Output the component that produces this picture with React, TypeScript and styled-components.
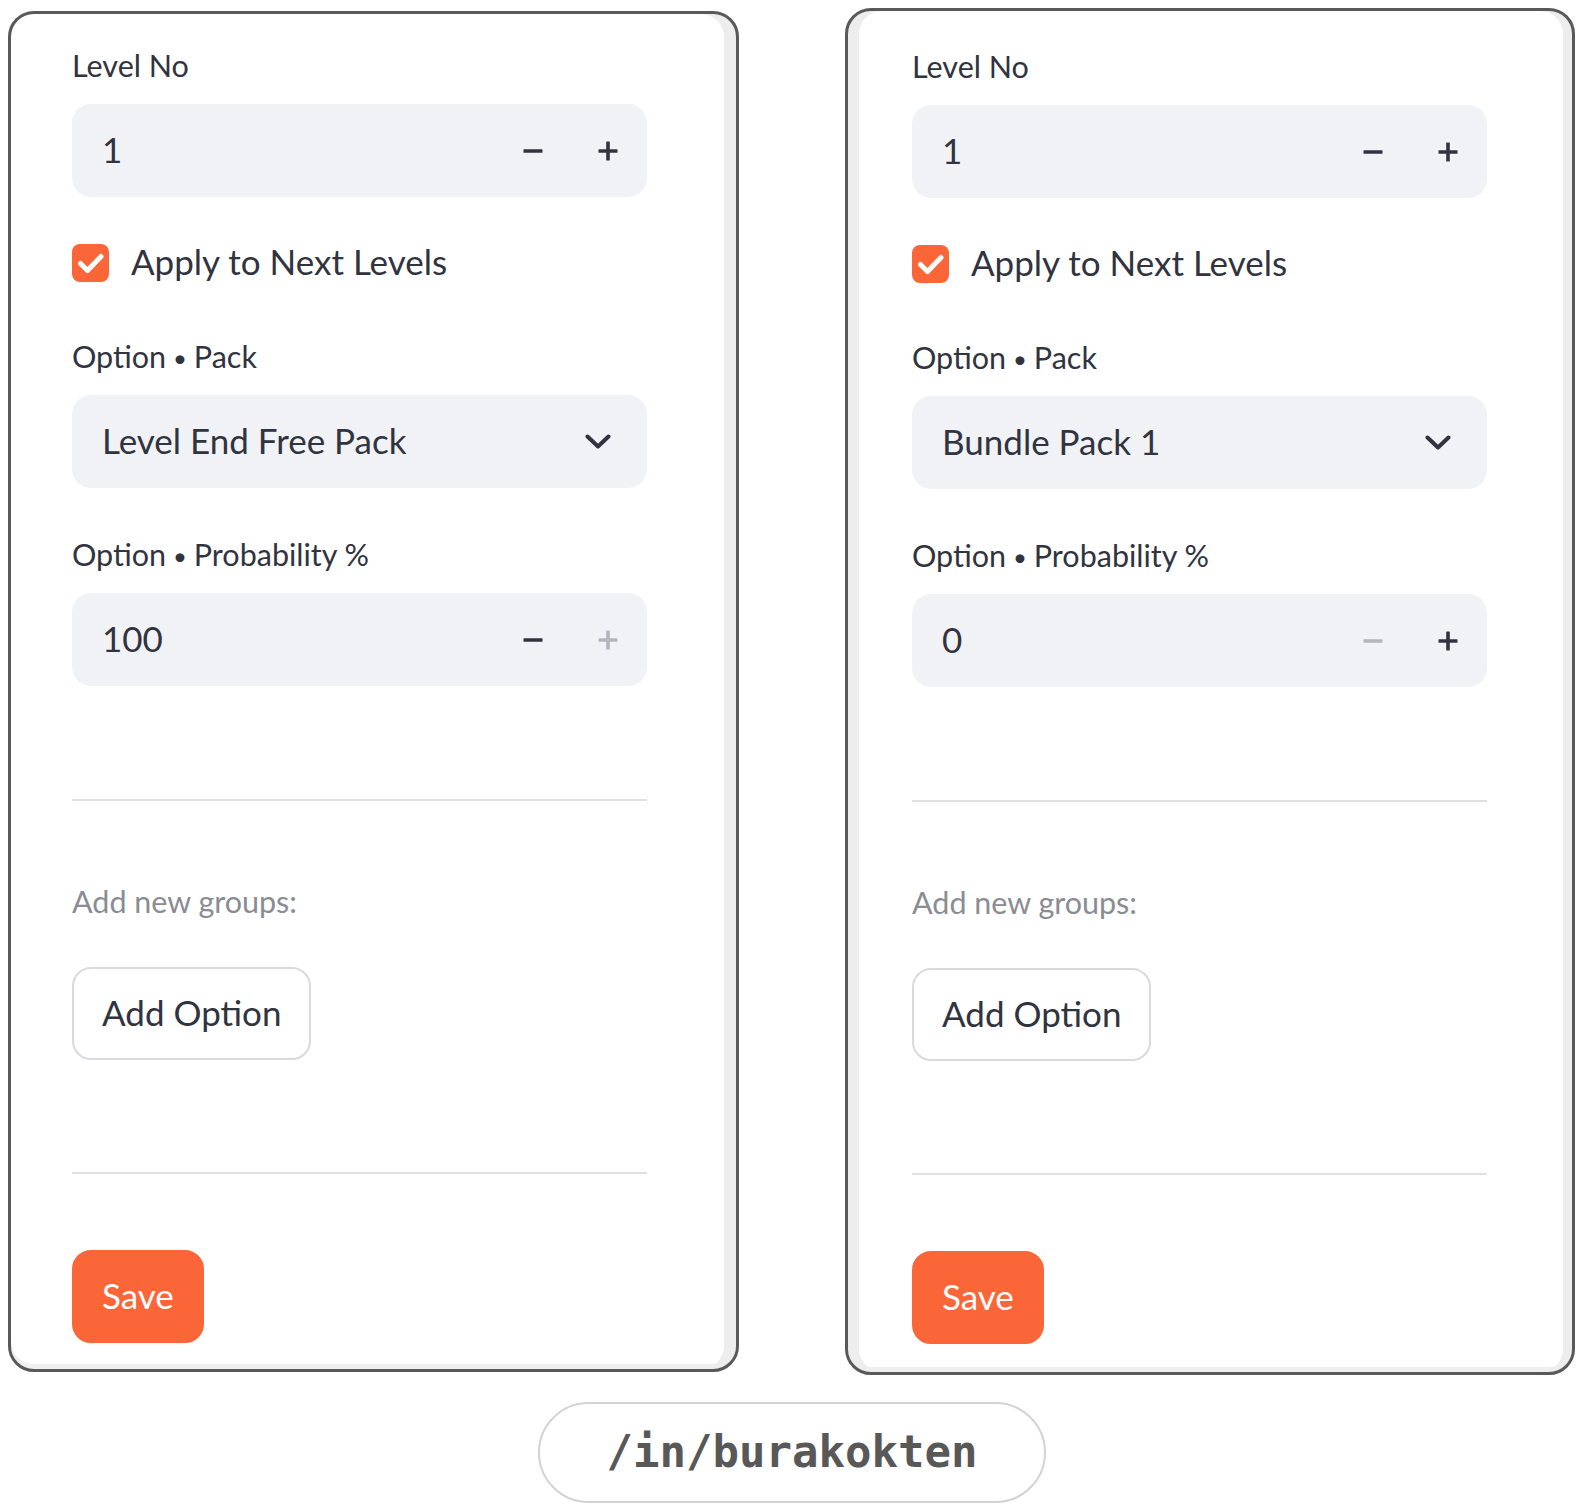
import React from "react";
import styled, { createGlobalStyle } from "styled-components";

const GlobalStyle = createGlobalStyle`
  html, body { margin: 0; padding: 0; background: #ffffff; }
  body { font-family: Lato, "Noto Sans", sans-serif; color: #31333f; }
  * { box-sizing: border-box; }
`;

const Page = styled.div`
  width: 1584px;
  display: flex;
  flex-direction: column;
  padding-top: 8px;
`;

const FramesRow = styled.div`
  display: flex;
  align-items: flex-start;
  gap: 106px;
  padding-left: 8px;
`;

const Frame = styled.div<{ $w: number; $h: number; $top: number; $stripL: number; $stripR: number }>`
  width: ${(p) => p.$w}px;
  height: ${(p) => p.$h}px;
  margin-top: ${(p) => p.$top}px;
  border: 3px solid #595959;
  border-radius: 26px;
  background: #ffffff;
  overflow: hidden;
  box-shadow:
    inset ${(p) => p.$stripL}px 0 0 #ededed,
    inset -${(p) => p.$stripR}px 0 0 #ededed,
    inset 0 -5px 0 #efefef;
`;

const Panel = styled.div<{ $pl: number; $pt: number }>`
  display: flex;
  flex-direction: column;
  width: ${(p) => p.$pl + 575}px;
  padding-left: ${(p) => p.$pl}px;
  padding-top: ${(p) => p.$pt}px;
`;

const Block = styled.div<{ $mt?: number }>`
  display: flex;
  flex-direction: column;
  margin-top: ${(p) => p.$mt ?? 0}px;
`;

const Label = styled.label<{ $muted?: boolean }>`
  display: block;
  height: 40px;
  font-size: 30.5px;
  line-height: 40px;
  color: ${(p) => (p.$muted ? "#8a8c93" : "#31333f")};
  white-space: nowrap;
`;

const Bullet = styled.span`
  display: inline-block;
  font-size: 24px;
  margin: 0 7px 0 -1px;
  vertical-align: 1px;
`;

const Field = styled.div`
  display: flex;
  flex-direction: column;
  gap: 19px;
`;

const InputBox = styled.div`
  display: flex;
  align-items: center;
  height: 93px;
  width: 575px;
  border-radius: 19px;
  background: #f0f2f6;
  padding-left: 30px;
  padding-right: 2px;
`;

const Value = styled.span`
  flex: 1;
  font-size: 35px;
  line-height: 42px;
  padding-bottom: 4px;
  color: #31333f;
  white-space: nowrap;
`;

const StepButton = styled.button<{ $disabled?: boolean }>`
  width: 75px;
  height: 93px;
  border: none;
  background: transparent;
  padding: 0;
  display: flex;
  align-items: center;
  justify-content: center;
  color: ${(p) => (p.$disabled ? "#b3b5bc" : "#31333f")};
`;

const ChevronSlot = styled.div`
  width: 75px;
  height: 93px;
  display: flex;
  align-items: center;
  justify-content: center;
  margin-right: 10px;
  color: #31333f;
`;

const CheckRow = styled.div`
  display: flex;
  align-items: flex-start;
  gap: 22px;
`;

const CheckBox = styled.div`
  width: 37px;
  height: 38px;
  border-radius: 8px;
  background: #fb6638;
  display: flex;
  align-items: center;
  justify-content: center;
  flex: none;
`;

const CheckText = styled.span`
  font-size: 35px;
  line-height: 30px;
  padding-top: 2px;
  color: #31333f;
  white-space: nowrap;
`;

const Divider = styled.hr`
  width: 575px;
  height: 2px;
  margin: 0;
  border: none;
  background: #dfe0e3;
`;

const Button = styled.button<{ $primary?: boolean }>`
  align-self: flex-start;
  height: 93px;
  padding: 0 28px 4px;
  border-radius: 19px;
  border: 2px solid ${(p) => (p.$primary ? "#fb6638" : "#d9dade")};
  background: ${(p) => (p.$primary ? "#fb6638" : "#ffffff")};
  color: ${(p) => (p.$primary ? "#ffffff" : "#31333f")};
  font-family: Lato, "Noto Sans", sans-serif;
  font-size: 35px;
  line-height: 42px;
`;

const PillRow = styled.div`
  display: flex;
  justify-content: center;
  margin-top: 27px;
`;

const Pill = styled.div`
  width: 508px;
  height: 101px;
  border: 2px solid #d3d3d3;
  border-radius: 51px;
  display: flex;
  align-items: center;
  justify-content: center;
  font-family: "DejaVu Sans Mono", "Liberation Mono", monospace;
  font-weight: 700;
  font-size: 44px;
  color: #585858;
  padding-bottom: 2px;
`;

const Minus = () => (
  <svg width="20" height="20" viewBox="0 0 20 20">
    <rect x="0.5" y="8.2" width="19" height="3.6" rx="0.6" fill="currentColor" />
  </svg>
);

const Plus = () => (
  <svg width="20" height="20" viewBox="0 0 20 20">
    <rect x="0.5" y="8.2" width="19" height="3.6" rx="0.6" fill="currentColor" />
    <rect x="8.2" y="0.5" width="3.6" height="19" rx="0.6" fill="currentColor" />
  </svg>
);

const Chevron = () => (
  <svg width="26" height="18" viewBox="0 0 26 18">
    <polyline points="2.5,3.5 13,13.5 23.5,3.5" fill="none" stroke="currentColor" strokeWidth="4" strokeLinecap="round" strokeLinejoin="round" />
  </svg>
);

const Check = () => (
  <svg width="37" height="38" viewBox="0 0 37 38">
    <polyline points="8.5,19.5 15.5,26.5 29,12.5" fill="none" stroke="#ffffff" strokeWidth="5" strokeLinecap="round" strokeLinejoin="round" />
  </svg>
);

const OptionLabel: React.FC<{ name: string }> = ({ name }) => (
  <Label>
    Option <Bullet>•</Bullet>
    {name}
  </Label>
);

type NumberProps = { label: React.ReactNode; value: string; minusDisabled?: boolean; plusDisabled?: boolean };

const NumberField: React.FC<NumberProps> = ({ label, value, minusDisabled, plusDisabled }) => (
  <Field>
    {label}
    <InputBox>
      <Value>{value}</Value>
      <StepButton $disabled={minusDisabled}><Minus /></StepButton>
      <StepButton $disabled={plusDisabled}><Plus /></StepButton>
    </InputBox>
  </Field>
);

const SelectField: React.FC<{ label: React.ReactNode; value: string }> = ({ label, value }) => (
  <Field>
    {label}
    <InputBox>
      <Value>{value}</Value>
      <ChevronSlot><Chevron /></ChevronSlot>
    </InputBox>
  </Field>
);

type DialogProps = {
  pack: string;
  prob: string;
  probMinusDisabled?: boolean;
  probPlusDisabled?: boolean;
  pl: number;
  pt: number;
};

const DialogContent: React.FC<DialogProps> = ({ pack, prob, probMinusDisabled, probPlusDisabled, pl, pt }) => (
  <Panel $pl={pl} $pt={pt}>
    <NumberField label={<Label>Level No</Label>} value="1" />
    <Block $mt={47}>
      <CheckRow>
        <CheckBox><Check /></CheckBox>
        <CheckText>Apply to Next Levels</CheckText>
      </CheckRow>
    </Block>
    <Block $mt={54}>
      <SelectField label={<OptionLabel name="Pack" />} value={pack} />
    </Block>
    <Block $mt={46}>
      <NumberField
        label={<OptionLabel name="Probability %" />}
        value={prob}
        minusDisabled={probMinusDisabled}
        plusDisabled={probPlusDisabled}
      />
    </Block>
    <Block $mt={113}>
      <Divider />
    </Block>
    <Block $mt={80}>
      <Label $muted>Add new groups:</Label>
    </Block>
    <Block $mt={46}>
      <Button>Add Option</Button>
    </Block>
    <Block $mt={112}>
      <Divider />
    </Block>
    <Block $mt={76}>
      <Button $primary>Save</Button>
    </Block>
  </Panel>
);

export default function App() {
  return (
    <>
      <GlobalStyle />
      <Page>
        <FramesRow>
          <Frame $w={731} $h={1361} $top={3} $stripL={0} $stripR={12}>
            <DialogContent pack="Level End Free Pack" prob="100" probPlusDisabled pl={61} pt={31} />
          </Frame>
          <Frame $w={730} $h={1367} $top={0} $stripL={11} $stripR={9}>
            <DialogContent pack="Bundle Pack 1" prob="0" probMinusDisabled pl={64} pt={35} />
          </Frame>
        </FramesRow>
        <PillRow>
          <Pill>/in/burakokten</Pill>
        </PillRow>
      </Page>
    </>
  );
}
